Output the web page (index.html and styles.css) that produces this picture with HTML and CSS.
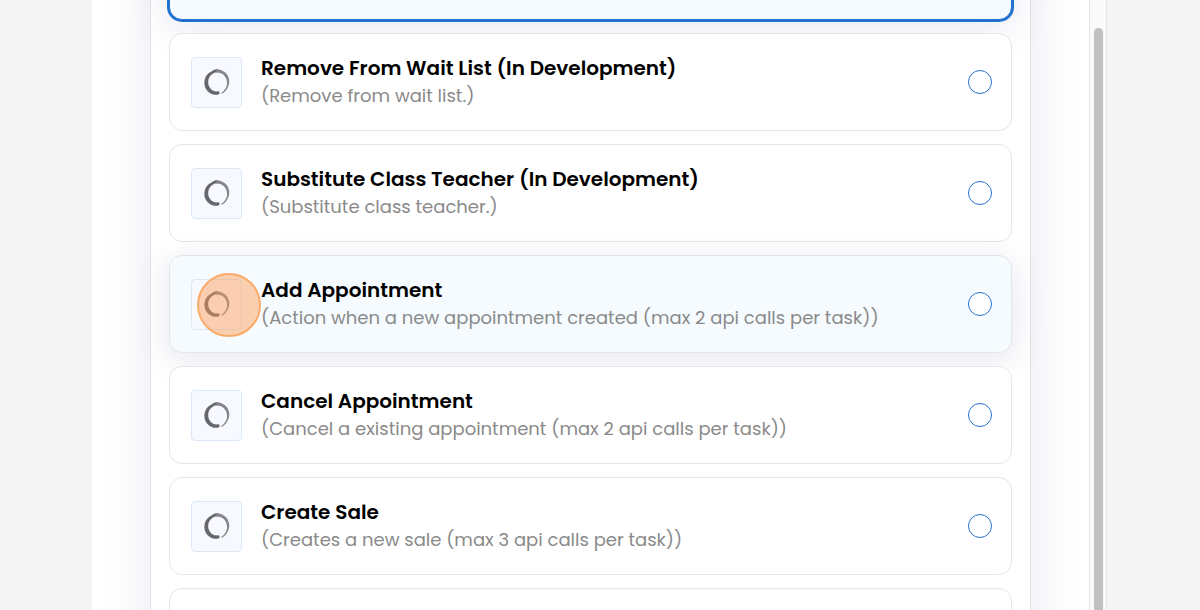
FILE: index.html
```html
<!DOCTYPE html>
<html lang="en">
<head>
  <meta charset="UTF-8">
  <title>Choose action</title>
  <link rel="stylesheet" href="styles.css">
</head>
<body>
  <svg class="sprite" aria-hidden="true">
    <symbol id="ring" viewBox="0 0 28 28">
      <path fill="#66676c" d="M15.500 26.500C13 27.400 8.500 26.600 5.500 24C2 21 .8 16.500 1.600 12.500C2.200 8.500 5 5 8.500 3.500C10.500 1.800 13 1.200 15 1.400C17.500 1.700 19.500 3 21 4.500C17.500 3.900 14.500 3.500 12 4.500C8 6 5.500 9.500 5.200 13.500C5 17.500 7 21 10.300 22.800C12 23.700 13.800 23.500 15.500 23.300C17 23.800 17 26 15.500 26.500Z"/>
      <path fill="#85868b" d="M14 1.600C17 1.200 19 2.500 20.500 3.600C23 4.600 24.800 7 25.500 9.500C26.800 12.500 26.400 16 25.200 18.500C24 21.800 21.500 24.500 18.800 25.900C18.200 25.800 18.100 25.200 18.600 24.800C21.500 22.500 23.500 19.500 24 16.500C24.300 13.500 23.600 10.800 22 8.600C20 5.900 17 4.400 12.500 4.600Z"/>
    </symbol>
  </svg>

  <div class="shell">
    <main class="content">
      <form class="panel">
        <div class="card selected"></div>
        <label class="card">
          <span class="icon"><svg><use href="#ring"/></svg></span>
          <span class="text">
            <span class="title">Remove From Wait List (In Development)</span>
            <span class="desc">(Remove from wait list.)</span>
          </span>
          <input type="radio" name="action">
        </label>
        <label class="card">
          <span class="icon"><svg><use href="#ring"/></svg></span>
          <span class="text">
            <span class="title">Substitute Class Teacher (In Development)</span>
            <span class="desc">(Substitute class teacher.)</span>
          </span>
          <input type="radio" name="action">
        </label>
        <label class="card active">
          <span class="icon"><svg><use href="#ring"/></svg></span>
          <span class="text">
            <span class="title">Add Appointment</span>
            <span class="desc">(Action when a new appointment created (max 2 api calls per task))</span>
          </span>
          <input type="radio" name="action">
          <span class="pointer"></span>
        </label>
        <label class="card">
          <span class="icon"><svg><use href="#ring"/></svg></span>
          <span class="text">
            <span class="title">Cancel Appointment</span>
            <span class="desc">(Cancel a existing appointment (max 2 api calls per task))</span>
          </span>
          <input type="radio" name="action">
        </label>
        <label class="card">
          <span class="icon"><svg><use href="#ring"/></svg></span>
          <span class="text">
            <span class="title">Create Sale</span>
            <span class="desc">(Creates a new sale (max 3 api calls per task))</span>
          </span>
          <input type="radio" name="action">
        </label>
        <div class="card"></div>
      </form>
    </main>
    <div class="scrollbar"><div class="thumb"></div></div>
  </div>
</body>
</html>
```
FILE: styles.css
```css
* {
  box-sizing: border-box;
}
body {
  margin: 0;
  overflow: hidden;
  background: #f4f4f4;
  font-family: Poppins, Inter, sans-serif;
}
.sprite {
  display: none;
}
.shell {
  display: flex;
  height: 100vh;
  margin: 0 93px 0 92px;
  background: #fff;
}
.content {
  flex: 1;
  min-width: 0;
  padding: 0 58px;
  overflow: hidden;
}

/* the list is scrolled part way through the first card */
.panel {
  display: flex;
  flex-direction: column;
  gap: 13px;
  margin-top: -79px;
  padding: 0 18px 20px;
  border: 1px solid #e3e3e8;
  background: #fff;
  box-shadow: 0 0 50px rgba(70, 70, 140, .12);
}
.card {
  position: relative;
  display: flex;
  align-items: center;
  gap: 19px;
  min-height: 98px;
  padding: 0 19px 0 21px;
  border: 1px solid #e6e6e8;
  border-radius: 13px;
  background: #fff;
}
.selected {
  border-color: #2172d0;
  background: #f5fbff;
  box-shadow: 0 0 0 2px #2172d0, 0 6px 40px rgba(70, 70, 140, .14);
}
.active {
  background: #f5fbfe;
  box-shadow: 0 6px 32px rgba(70, 70, 140, .14);
}
.icon {
  display: flex;
  align-items: center;
  justify-content: center;
  width: 51px;
  height: 51px;
  border: 1px solid #dce8f5;
  border-radius: 4px;
  background: #f7f9ff;
}
.icon svg {
  width: 28px;
  height: 28px;
}
.text {
  flex: 1;
  display: flex;
  flex-direction: column;
  line-height: 27px;
}
.title {
  color: #000;
  font-size: 20px;
  font-weight: 600;
}
.desc {
  color: #8a8a8a;
  font-size: 18px;
}
.card input {
  appearance: none;
  width: 24px;
  height: 24px;
  margin: 0;
  border: 1px solid #2b70cc;
  border-radius: 50%;
  background: #fff;
}
.pointer {
  position: absolute;
  top: 17px;
  left: 27px;
  width: 64px;
  height: 64px;
  border: 2px solid #fbab68;
  border-radius: 50%;
  background: rgba(255, 152, 82, .45);
}
.scrollbar {
  width: 18px;
  padding: 28px 3px 0 4px;
  border: 1px solid #e6e6e6;
  border-width: 0 1px;
  background: #fafafa;
}
.thumb {
  height: 100%;
  border-radius: 5px 5px 0 0;
  background: #c1c1c1;
}
```
